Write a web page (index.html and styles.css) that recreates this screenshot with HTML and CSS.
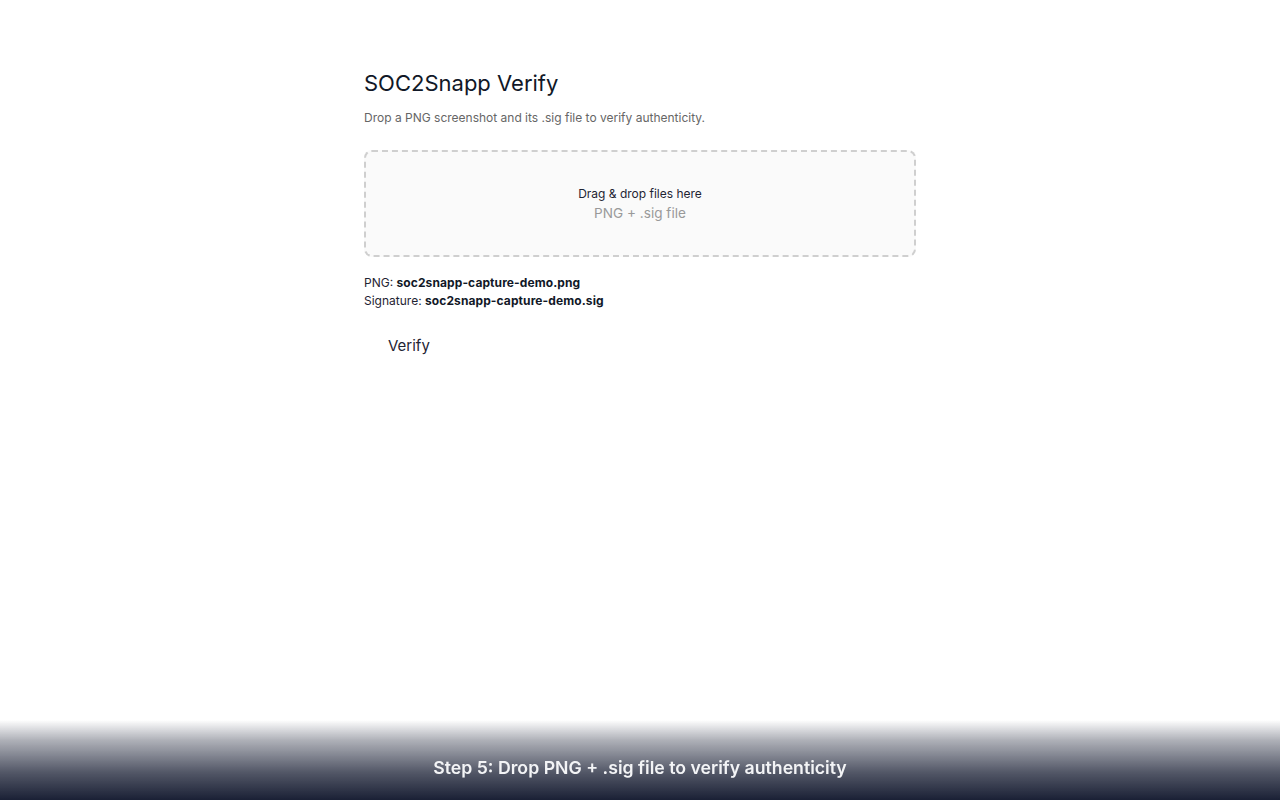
FILE: index.html
```html
<!DOCTYPE html>
<html lang="en">
<head>
<meta charset="utf-8">
<title>SOC2Snapp Verify</title>
<link rel="stylesheet" href="styles.css">
</head>
<body>
<main class="page">
  <h1 class="title">SOC2Snapp Verify</h1>
  <p class="subtitle">Drop a PNG screenshot and its .sig file to verify authenticity.</p>
  <div class="dropzone">
    <div class="drop-main">Drag &amp; drop files here</div>
    <div class="drop-hint">PNG + .sig file</div>
  </div>
  <div class="files">
    <div class="file-line">PNG: <strong>soc2snapp-capture-demo.png</strong></div>
    <div class="file-line">Signature: <strong>soc2snapp-capture-demo.sig</strong></div>
  </div>
  <button class="verify-btn" type="button">Verify</button>
</main>
<div class="caption-bar">
  <span class="caption">Step 5: Drop PNG + .sig file to verify authenticity</span>
</div>
</body>
</html>
```
FILE: styles.css
```css
* { box-sizing: border-box; }
html, body { margin: 0; padding: 0; height: 100%; }
body {
  font-family: Inter, "Noto Sans", "Liberation Sans", sans-serif;
  background: #ffffff;
  color: #111827;
}
.page {
  width: 552px;
  margin: 0 auto;
  padding-top: 68px;
}
.title {
  margin: 0;
  font-size: 22px;
  font-weight: 400;
  line-height: 30px;
  color: #111827;
}
.subtitle {
  margin: 11px 0 0;
  font-size: 12px;
  line-height: 18px;
  color: #666666;
}
.dropzone {
  margin-top: 23px;
  height: 107px;
  border: 2px dashed #cfcfcf;
  border-radius: 8px;
  background: #fafafa;
  display: flex;
  flex-direction: column;
  align-items: center;
  justify-content: center;
}
.drop-main {
  font-size: 12px;
  line-height: 18px;
  color: #1f2433;
}
.drop-hint {
  font-size: 13.6px;
  line-height: 20px;
  color: #999999;
}
.files {
  margin-top: 17px;
}
.file-line {
  font-size: 12px;
  line-height: 18px;
  color: #1f2433;
}
.file-line strong {
  font-weight: 700;
  letter-spacing: 0.1px;
  color: #111827;
}
.verify-btn {
  margin-top: 18px;
  padding: 8px 24px;
  border: none;
  background: transparent;
  font-family: inherit;
  font-size: 15px;
  line-height: 20px;
  color: #1f2433;
  cursor: pointer;
}
.caption-bar {
  position: fixed;
  left: 0;
  right: 0;
  bottom: 0;
  height: 80px;
  background: linear-gradient(to bottom, rgba(26, 32, 53, 0) 0%, rgba(26, 32, 53, 0.35) 25%, rgba(26, 32, 53, 0.75) 65%, rgba(26, 32, 53, 1) 100%);
  display: flex;
  align-items: flex-end;
  justify-content: center;
  padding-bottom: 20px;
}
.caption {
  font-size: 17.7px;
  font-weight: 600;
  line-height: 24px;
  color: #f3f4f6;
}
```
